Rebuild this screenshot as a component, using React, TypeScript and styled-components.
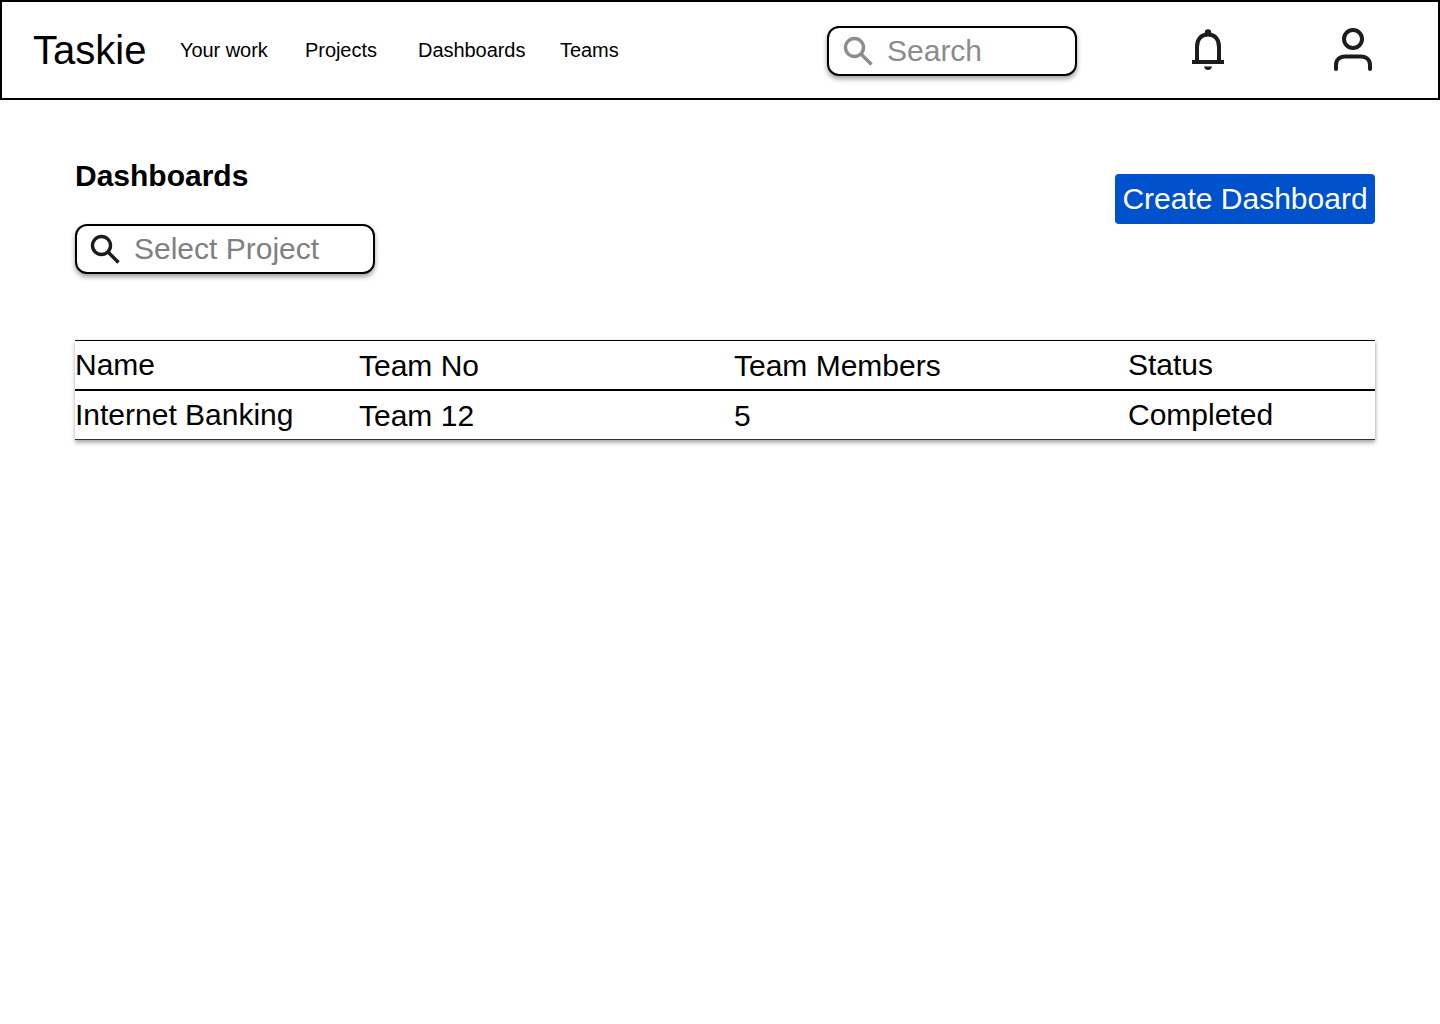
import React from "react";
import styled, { createGlobalStyle } from "styled-components";

const Global = createGlobalStyle`
  html, body { margin: 0; padding: 0; background: #fff; }
  body { font-family: "Liberation Sans", Arial, sans-serif; color: #000; }
`;

const Page = styled.div`
  width: 1440px;
  height: 1024px;
  overflow: hidden;
`;

const Header = styled.header`
  box-sizing: border-box;
  height: 100px;
  border: 2px solid #000;
  display: flex;
  align-items: center;
  padding-left: 31px;
`;

const Logo = styled.div`
  font-size: 40px;
  line-height: 44px;
  width: 147px;
  flex: none;
`;

const NavItem = styled.a<{ $width: number }>`
  font-size: 20px;
  line-height: 24px;
  width: ${(p) => p.$width}px;
  flex: none;
  white-space: nowrap;
  letter-spacing: -0.05px;
  color: #000;
`;

const SearchBox = styled.div<{ $width: number; $drop?: number }>`
  box-sizing: border-box;
  width: ${(p) => p.$width}px;
  height: 50px;
  flex: none;
  margin-top: ${(p) => p.$drop ?? 0}px;
  display: flex;
  align-items: center;
  background: #fff;
  border: 2px solid #000;
  border-radius: 12px;
  box-shadow: 0 3px 5px rgba(0, 0, 0, 0.38);
`;

const SearchIcon = styled.svg<{ $left: number; $right: number }>`
  flex: none;
  margin-left: ${(p) => p.$left}px;
  margin-right: ${(p) => p.$right}px;
`;

const Placeholder = styled.span<{ $color: string }>`
  font-size: 30px;
  line-height: 36px;
  color: ${(p) => p.$color};
  white-space: nowrap;
`;

const IconSlot = styled.div<{ $left: number }>`
  margin-left: ${(p) => p.$left}px;
  flex: none;
  display: flex;
`;

const Main = styled.main`
  padding: 58px 65px 0 75px;
`;

const TopRow = styled.div`
  display: flex;
  justify-content: space-between;
  align-items: flex-start;
`;

const Left = styled.div`
  display: flex;
  flex-direction: column;
`;

const Title = styled.h1`
  margin: 0 0 31px;
  font-size: 30px;
  line-height: 35px;
  font-weight: 700;
`;

const CreateButton = styled.button`
  box-sizing: border-box;
  width: 260px;
  height: 50px;
  margin-top: 16px;
  padding: 0;
  border: 0;
  border-radius: 4px;
  background: #0052cc;
  color: #fff;
  font-family: inherit;
  font-size: 30px;
  line-height: 50px;
  white-space: nowrap;
`;

const Table = styled.div`
  margin-top: 66px;
  width: 1300px;
  border-top: 1px solid #000;
  border-bottom: 1px solid #333;
  box-shadow: 0 3px 4px rgba(0, 0, 0, 0.3), 1px 0 3px rgba(0, 0, 0, 0.12);
  background: #fff;
`;

const Row = styled.div<{ $divider?: boolean }>`
  display: grid;
  grid-template-columns: 284px 375px 394px 1fr;
  height: 48px;
  align-items: center;
  ${(p) => (p.$divider ? "border-bottom: 2px solid #000;" : "")}
`;

const Cell = styled.div<{ $low?: boolean }>`
  font-size: 30px;
  line-height: 36px;
  white-space: nowrap;
  ${(p) => (p.$low ? "padding-top: 2px;" : "")}
`;

const Search = ({ color, left, right, weight }: { color: string; left: number; right: number; weight: number }) => (
  <SearchIcon $left={left} $right={right} width="32" height="32" viewBox="0 0 32 32" fill="none">
    <circle cx="12.5" cy="12.5" r="9" stroke={color} strokeWidth={weight} />
    <path d="M19 19 L29.5 29.5" stroke={color} strokeWidth={weight} />
  </SearchIcon>
);

const Bell = () => (
  <svg width="36" height="44" viewBox="0 0 36 44" fill="none">
    <path d="M7 34 V19 C7 10.5 11.5 6.5 18 6.5 C24.5 6.5 29 10.5 29 19 V34" stroke="#1c1b1f" strokeWidth="4" />
    <path d="M2 34 H34" stroke="#1c1b1f" strokeWidth="4" />
    <circle cx="18" cy="4.5" r="3.2" fill="#1c1b1f" />
    <path d="M14 38.5 H22 C21.6 41 20 42 18 42 C16 42 14.4 41 14 38.5 Z" fill="#1c1b1f" />
  </svg>
);

const User = () => (
  <svg width="40" height="44" viewBox="0 0 40 44" fill="none">
    <circle cx="20" cy="11" r="9" stroke="#1c1b1f" strokeWidth="4" />
    <path d="M3 41 V37 C3 32 6.5 28.5 12 28.5 H28 C33.5 28.5 37 32 37 37 V41" stroke="#1c1b1f" strokeWidth="4" strokeLinecap="round" />
  </svg>
);

export default function App() {
  return (
    <Page>
      <Global />
      <Header>
        <Logo>Taskie</Logo>
        <NavItem $width={125}>Your work</NavItem>
        <NavItem $width={113}>Projects</NavItem>
        <NavItem $width={142}>Dashboards</NavItem>
        <NavItem $width={267}>Teams</NavItem>
        <SearchBox $width={250} $drop={2}>
          <Search color="#8c8c8c" left={13} right={13} weight={3.4} />
          <Placeholder $color="#8c8c8c">Search</Placeholder>
        </SearchBox>
        <IconSlot $left={113}><Bell /></IconSlot>
        <IconSlot $left={107}><User /></IconSlot>
      </Header>
      <Main>
        <TopRow>
          <Left>
            <Title>Dashboards</Title>
            <SearchBox $width={300}>
              <Search color="#1c1b1f" left={12} right={13} weight={3.4} />
              <Placeholder $color="#808080">Select Project</Placeholder>
            </SearchBox>
          </Left>
          <CreateButton>Create Dashboard</CreateButton>
        </TopRow>
        <Table>
          <Row $divider>
            <Cell>Name</Cell>
            <Cell $low>Team No</Cell>
            <Cell $low>Team Members</Cell>
            <Cell>Status</Cell>
          </Row>
          <Row>
            <Cell>Internet Banking</Cell>
            <Cell $low>Team 12</Cell>
            <Cell $low>5</Cell>
            <Cell>Completed</Cell>
          </Row>
        </Table>
      </Main>
    </Page>
  );
}
